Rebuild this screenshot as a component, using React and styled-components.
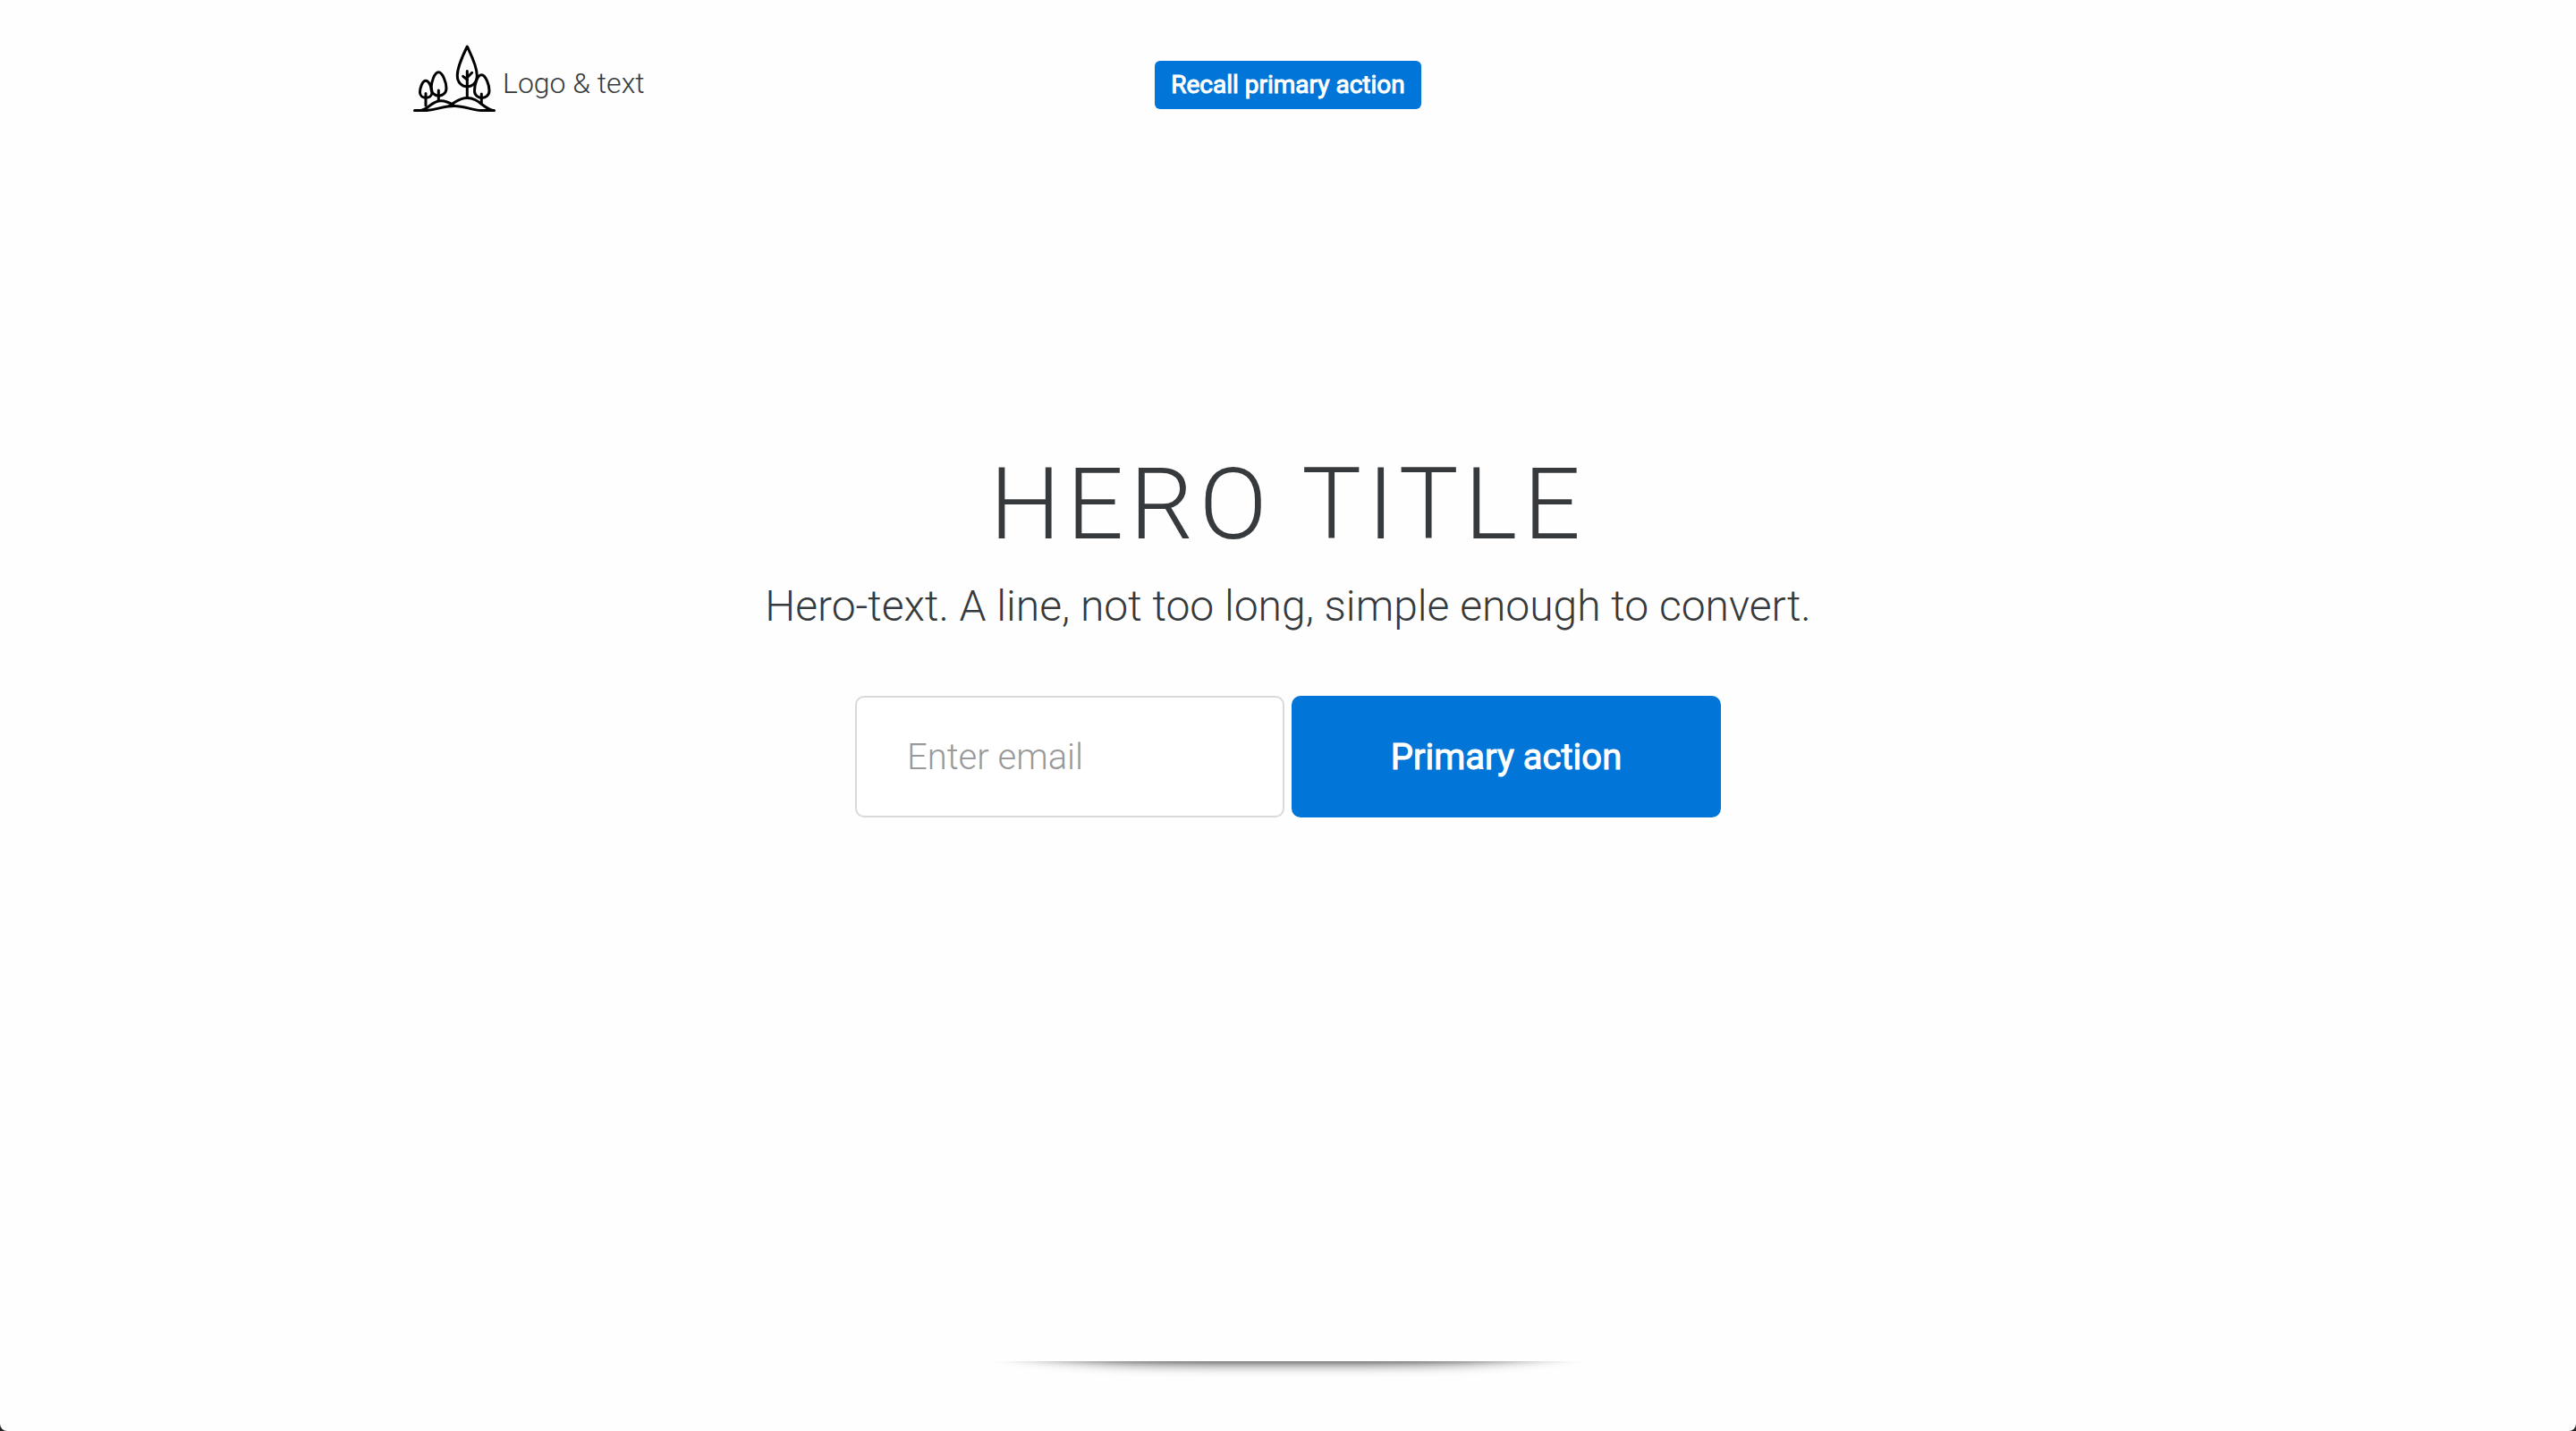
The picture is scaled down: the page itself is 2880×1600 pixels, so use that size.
import React from "react";
import styled, { createGlobalStyle } from "styled-components";

const Global = createGlobalStyle`
  *, *::before, *::after { box-sizing: border-box; }
  html { background: #222; }
  body {
    margin: 0;
    color: #373a3c;
    font-family: Roboto, "Liberation Sans", sans-serif;
    font-weight: 300;
  }
`;

const Page = styled.div`
  display: flex;
  flex-direction: column;
  min-height: 100vh;
  border-radius: 0 0 8px 8px;
  background: #fefefe;
`;

const Header = styled.header`
  display: grid;
  grid-template-columns: 1fr auto 1fr;
  align-items: center;
  width: 100%;
  max-width: 1968px;
  margin: 0 auto;
  padding: 46px 0 0;
`;

const Brand = styled.a`
  display: flex;
  align-items: center;
  gap: 10px;
  color: inherit;
  font-size: 32px;
  line-height: 48px;
  text-decoration: none;
`;

const BrandName = styled.span`
  padding-top: 10px;
`;

const LogoMark = styled.svg`
  width: 96px;
  height: 84px;
  fill: none;
  stroke: #000;
  stroke-width: 3;
  stroke-linecap: round;
  stroke-linejoin: round;
`;

const Button = styled.button`
  border: 0;
  background: #0275d8;
  color: #fff;
  font-family: inherit;
  font-weight: 400;
  -webkit-text-stroke: 1px #fff;
  cursor: pointer;
`;

const SmallButton = styled(Button)`
  height: 54px;
  margin-top: 14px;
  padding: 0 18px;
  border-radius: 6px;
  font-size: 28px;
  line-height: 42px;
`;

const Hero = styled.main`
  display: flex;
  flex: 1;
  flex-direction: column;
  align-items: center;
  justify-content: center;
  padding: 0 32px 236px;
  text-align: center;
`;

const Title = styled.h1`
  margin: 0;
  font-size: 112px;
  font-weight: 300;
  letter-spacing: 0.06em;
  line-height: 124px;
  text-transform: uppercase;
`;

const Lead = styled.p`
  margin: 16px 0 64px;
  font-size: 48px;
  line-height: 72px;
`;

const SignUp = styled.form`
  display: flex;
  gap: 8px;
`;

const EmailField = styled.input`
  width: 480px;
  height: 136px;
  padding: 0 56px;
  border: 2px solid #d9d9d9;
  border-radius: 10px;
  background: #fff;
  color: inherit;
  font-family: inherit;
  font-size: 40px;
  font-weight: 300;
  &::placeholder { color: #999; opacity: 1; }
`;

const LargeButton = styled(Button)`
  width: 480px;
  height: 136px;
  border-radius: 10px;
  font-size: 40px;
`;

/* The rule is the lower shadow of a rounded bar hidden above the clip edge. */
const Divider = styled.hr`
  width: 676px;
  max-width: 100%;
  height: 32px;
  margin: 0 auto 46px;
  border: 0;
  overflow: hidden;
  &::after {
    content: "";
    display: block;
    height: 50px;
    margin-top: -50px;
    border-radius: 250px / 24px;
    box-shadow: 0 0 16px #000;
  }
`;

function Trees() {
  return (
    <LogoMark viewBox="456 46 96 84" overflow="visible" aria-hidden="true">
      <path d="M472 123C480 121 483 112.700 493 112.700C499 112.700 503 115 507 117.500" />
      <path d="M502 118.500C508 115 513 109.500 522.300 109.500C535 109.500 540 121 551 123.500" />
      <path d="M463.500 123.500H477C490 122 497 118.500 508 118.500C520 118.500 528 123.500 538 123.500H552.500" />
      <path d="M476 90.300C480 90.300 483 99 483 103.300C483 111.300 469.500 111.300 469.500 103.300C469.500 99 472 90.300 476 90.300Z" />
      <path d="M490.300 80.700C495 80.700 499 93 499 98.500C499 110 482 110 482 98.500C482 93 485.500 80.700 490.300 80.700Z" />
      <path d="M522.300 52C527 62 533.300 74 533.300 84.500C533.300 101 511.300 101 511.300 84.500C511.300 74 517.500 62 522.300 52Z" />
      <path d="M538.300 83.700C543 83.700 547 95 547 101.500C547 112 530.500 112 530.500 101.500C530.500 95 533.500 83.700 538.300 83.700Z" />
      <path d="M476 104.500V118M490.300 101V112M522.300 79.500V109M538.300 105V115" />
      <path d="M517.700 85.300L522.300 89M527.700 81.300L522.300 86.700" />
    </LogoMark>
  );
}

export default function App() {
  return (
    <Page>
      <Global />
      <Header>
        <Brand href="#">
          <Trees />
          <BrandName>Logo &amp; text</BrandName>
        </Brand>
        <SmallButton type="button">Recall primary action</SmallButton>
      </Header>
      <Hero>
        <Title>Hero title</Title>
        <Lead>Hero-text. A line, not too long, simple enough to convert.</Lead>
        <SignUp onSubmit={(event) => event.preventDefault()}>
          <EmailField type="email" placeholder="Enter email" aria-label="Email" />
          <LargeButton type="submit">Primary action</LargeButton>
        </SignUp>
      </Hero>
      <Divider />
    </Page>
  );
}
